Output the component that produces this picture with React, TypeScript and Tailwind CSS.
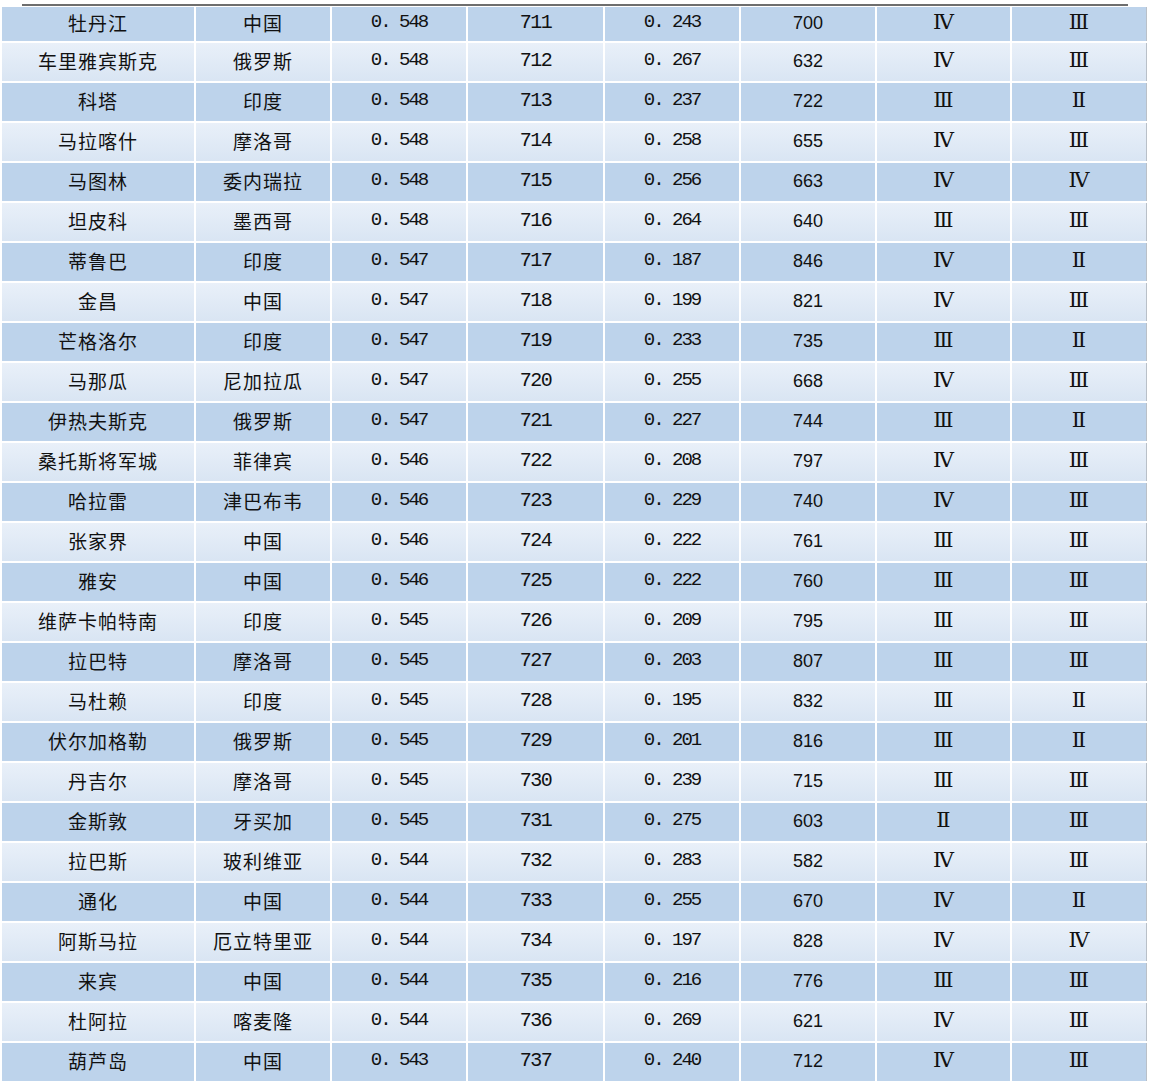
const rows: string[][] = [
  ["牡丹江", "中国", "0. 548", "711", "0. 243", "700", "Ⅳ", "Ⅲ"],
  ["车里雅宾斯克", "俄罗斯", "0. 548", "712", "0. 267", "632", "Ⅳ", "Ⅲ"],
  ["科塔", "印度", "0. 548", "713", "0. 237", "722", "Ⅲ", "Ⅱ"],
  ["马拉喀什", "摩洛哥", "0. 548", "714", "0. 258", "655", "Ⅳ", "Ⅲ"],
  ["马图林", "委内瑞拉", "0. 548", "715", "0. 256", "663", "Ⅳ", "Ⅳ"],
  ["坦皮科", "墨西哥", "0. 548", "716", "0. 264", "640", "Ⅲ", "Ⅲ"],
  ["蒂鲁巴", "印度", "0. 547", "717", "0. 187", "846", "Ⅳ", "Ⅱ"],
  ["金昌", "中国", "0. 547", "718", "0. 199", "821", "Ⅳ", "Ⅲ"],
  ["芒格洛尔", "印度", "0. 547", "719", "0. 233", "735", "Ⅲ", "Ⅱ"],
  ["马那瓜", "尼加拉瓜", "0. 547", "720", "0. 255", "668", "Ⅳ", "Ⅲ"],
  ["伊热夫斯克", "俄罗斯", "0. 547", "721", "0. 227", "744", "Ⅲ", "Ⅱ"],
  ["桑托斯将军城", "菲律宾", "0. 546", "722", "0. 208", "797", "Ⅳ", "Ⅲ"],
  ["哈拉雷", "津巴布韦", "0. 546", "723", "0. 229", "740", "Ⅳ", "Ⅲ"],
  ["张家界", "中国", "0. 546", "724", "0. 222", "761", "Ⅲ", "Ⅲ"],
  ["雅安", "中国", "0. 546", "725", "0. 222", "760", "Ⅲ", "Ⅲ"],
  ["维萨卡帕特南", "印度", "0. 545", "726", "0. 209", "795", "Ⅲ", "Ⅲ"],
  ["拉巴特", "摩洛哥", "0. 545", "727", "0. 203", "807", "Ⅲ", "Ⅲ"],
  ["马杜赖", "印度", "0. 545", "728", "0. 195", "832", "Ⅲ", "Ⅱ"],
  ["伏尔加格勒", "俄罗斯", "0. 545", "729", "0. 201", "816", "Ⅲ", "Ⅱ"],
  ["丹吉尔", "摩洛哥", "0. 545", "730", "0. 239", "715", "Ⅲ", "Ⅲ"],
  ["金斯敦", "牙买加", "0. 545", "731", "0. 275", "603", "Ⅱ", "Ⅲ"],
  ["拉巴斯", "玻利维亚", "0. 544", "732", "0. 283", "582", "Ⅳ", "Ⅲ"],
  ["通化", "中国", "0. 544", "733", "0. 255", "670", "Ⅳ", "Ⅱ"],
  ["阿斯马拉", "厄立特里亚", "0. 544", "734", "0. 197", "828", "Ⅳ", "Ⅳ"],
  ["来宾", "中国", "0. 544", "735", "0. 216", "776", "Ⅲ", "Ⅲ"],
  ["杜阿拉", "喀麦隆", "0. 544", "736", "0. 269", "621", "Ⅳ", "Ⅲ"],
  ["葫芦岛", "中国", "0. 543", "737", "0. 240", "712", "Ⅳ", "Ⅲ"],
];

// per-column text styling
const colClass = [
  "font-['Noto_Sans_CJK_SC',sans-serif] text-[19px] tracking-[1px]",
  "font-['Noto_Sans_CJK_SC',sans-serif] text-[19px] tracking-[1px]",
  "font-['Liberation_Mono',monospace] text-[19px] tracking-[-2px]",
  "font-['Liberation_Mono',monospace] text-[20px] tracking-[-1.5px]",
  "font-['Liberation_Mono',monospace] text-[19px] tracking-[-2px]",
  "font-['Liberation_Sans',sans-serif] text-[18px]",
  "font-['DejaVu_Serif',serif] text-[21px]",
  "font-['DejaVu_Serif',serif] text-[21px]",
];

export default function App() {
  return (
    <div className="w-[1150px] h-[1082px] overflow-hidden bg-white">
      {/* top rule */}
      <div className="h-[7px] pt-[4px] pl-[22px]">
        <div className="w-[1106px] h-[2px] bg-[#6e6e6e]" />
      </div>

      <div className="flex flex-col gap-y-[2px] pl-[2px]">
        {rows.map((row, i) => (
          <div
            key={i}
            className={`grid grid-cols-[192px_134px_134px_135px_134px_134px_133px_134px] gap-x-[2px] w-[1145px] border-r border-[#b9c0c8] ${
              i === 0 ? "h-[34px]" : "h-[38px]"
            }`}
          >
            {row.map((cell, j) => (
              <div
                key={j}
                className={`flex items-center justify-center pb-[3px] leading-none text-[#111] ${
                  i % 2 === 0
                    ? "bg-[#bdd3eb]"
                    : "bg-gradient-to-b from-[#e9f0f9] to-[#d9e5f3]"
                } ${colClass[j]}`}
              >
                {cell}
              </div>
            ))}
          </div>
        ))}
      </div>
    </div>
  );
}
